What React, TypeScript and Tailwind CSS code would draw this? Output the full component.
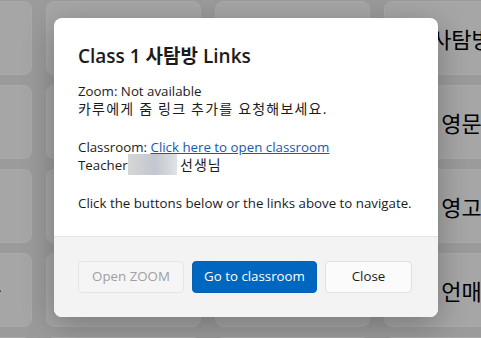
import React from "react";

const cols = [
  ["", "", "", "사회·문화", ""],
  ["", "", "", "", ""],
  ["", "", "", "", ""],
  ["사탐방", "영문", "영고", "언매", ""],
];

export default function App() {
  const font = { fontFamily: '"Open Sans", "Noto Sans CJK KR", sans-serif' };
  return (
    <div className="relative w-[481px] h-[338px] overflow-hidden bg-[#9b9b9b]" style={font}>
      <div className="-ml-[123px] pt-[1px] grid grid-cols-[155px_155px_155px_155px] gap-x-[14px] gap-y-[10px]">
        {[0, 1, 2, 3, 4].map((r) =>
          cols.map((c, ci) => (
            <div
              key={`${r}-${ci}`}
              className="h-[74px] rounded-lg bg-[#a6a6a6] border border-[#aaaaaa] flex items-center justify-center text-[22px] text-black whitespace-nowrap"
              style={{ fontFamily: '"Noto Sans CJK KR", sans-serif' }}
            >
              {c[r]}
            </div>
          ))
        )}
      </div>

      <div className="absolute left-[54px] top-[18px] w-[384px] rounded-lg bg-white overflow-hidden shadow-[0_8px_32px_rgba(0,0,0,0.28)] text-[#1b1b1b]">
        <div className="px-6 pt-6 pb-6">
          <h2 className="text-[19px] leading-[28px] font-semibold whitespace-nowrap">Class 1 사탐방 Links</h2>
          <div className="mt-3 text-[13.3px] leading-[18px] whitespace-nowrap">
            <p>
              Zoom: Not available
              <br />
              <span className="text-[14px] tracking-[1.2px]">카루에게 줌 링크 추가를 요청해보세요.</span>
            </p>
            <p className="mt-5">
              Classroom:{" "}
              <a className="text-[#0f5bb5] underline" href="#">
                Click here to open classroom
              </a>
              <br />
              Teacher
              <span className="inline-block w-[49px] h-[21px] align-middle -mt-[3px] bg-[linear-gradient(90deg,#d6d6d6,#c2c7cf_55%,#dfe2e6)]" />{" "}
              <span className="text-[14px] tracking-[1px]">선생님</span>
            </p>
            <p className="mt-[19px]">Click the buttons below or the links above to navigate.</p>
          </div>
        </div>
        <div className="border-t border-[#e5e5e5] bg-[#f3f3f3] px-6 py-6 flex gap-2 text-[13.3px]">
          <button className="h-8 w-[106px] rounded border border-[#e5e5e5] bg-[#f5f5f5] text-[#a0a0a0]">
            Open ZOOM
          </button>
          <button className="h-8 w-[125px] rounded bg-[#0067c0] border border-[#0a5fb0] text-white">
            Go to classroom
          </button>
          <button className="h-8 w-[87px] rounded border border-[#e0e0e0] bg-[#fbfbfb] text-[#1b1b1b]">
            Close
          </button>
        </div>
      </div>
    </div>
  );
}
